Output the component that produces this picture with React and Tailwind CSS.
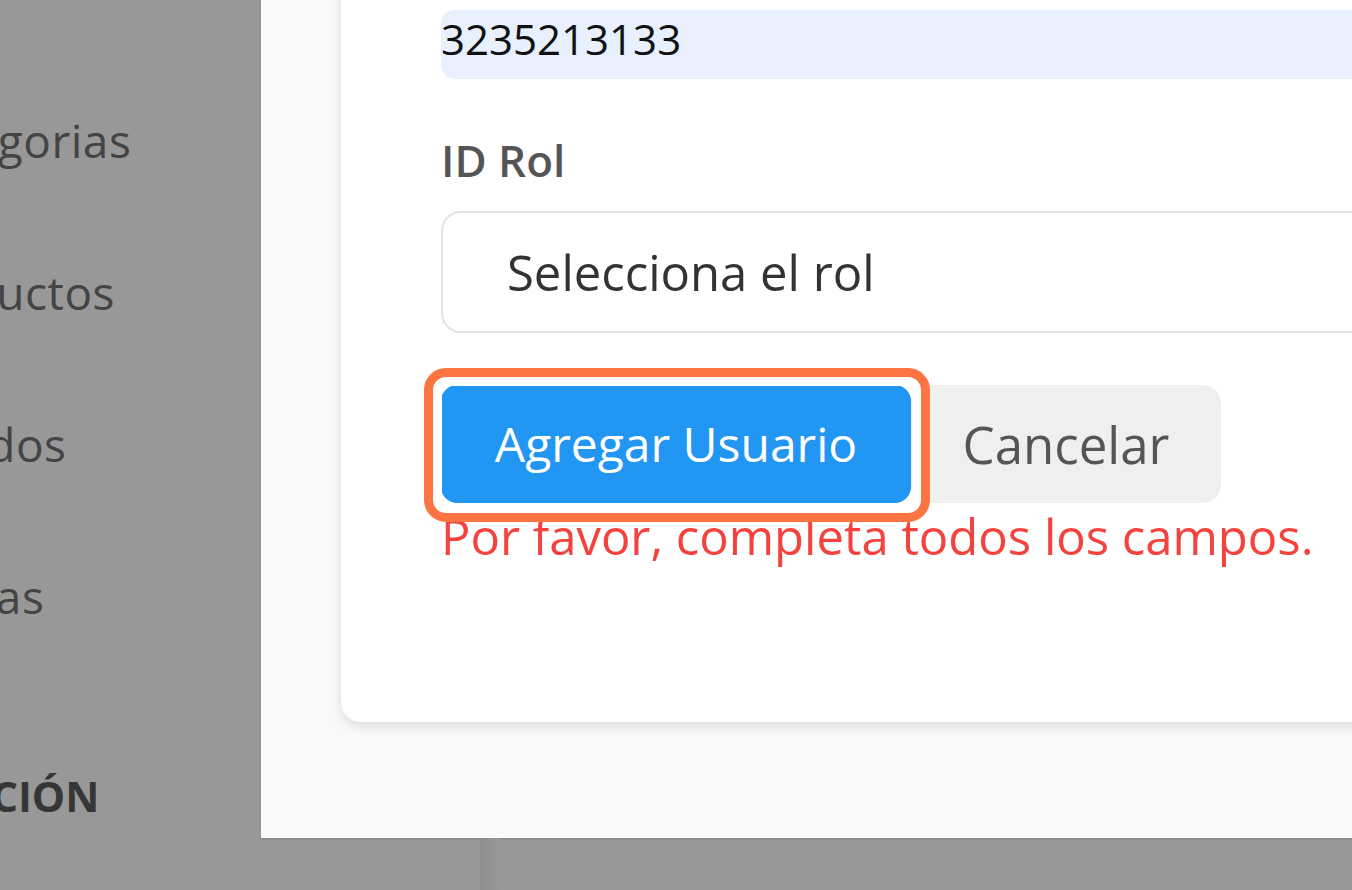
import React from "react";

const navItems = [
  { label: "Categorias", offset: "-ml-[101px]" },
  { label: "Productos", offset: "-ml-[108px]" },
  { label: "Pedidos", offset: "-ml-[108px]" },
  { label: "Ventas", offset: "-ml-[104px]" },
];

const Sidebar = () => (
  <div className="w-[261px] shrink-0 h-full overflow-hidden bg-[#989898] text-[#444]">
    <div className="pt-[64px] flex flex-col">
      {navItems.map((item) => (
        <div key={item.label} className={`h-[152px] flex items-center whitespace-nowrap ${item.offset}`}>
          <span className="text-[46px] leading-[46px] tracking-[0.5px]">{item.label}</span>
        </div>
      ))}
    </div>
    <div className="mt-[102px] h-[44px] flex items-center -ml-[259px] whitespace-nowrap">
      <span className="text-[42px] leading-[42px] font-bold text-[#363636]">CONFIGURACIÓN</span>
    </div>
  </div>
);

const UserForm = () => (
  <div className="-mt-[50px] pt-[60px] pl-[100px] pb-[156px] w-[1300px] shrink-0 bg-white rounded-[20px] shadow-[0_4px_12px_rgba(0,0,0,0.12)]">
    {/* telefono (autocompletado) */}
    <div className="h-[69px] bg-[#e8f0fe] rounded-[14px] pt-[8px]">
      <span className="text-[42px] leading-[42px] text-[#111]">3235213133</span>
    </div>

    <div className="mt-[59px] h-[44px] text-[44px] leading-[44px] font-semibold text-[#555]">ID Rol</div>

    <div className="mt-[29px] h-[122px] border-2 border-[#e2e2e2] rounded-[20px] pl-[64px] flex items-center">
      <span className="text-[49px] leading-[49px] text-[#333]">Selecciona el rol</span>
    </div>

    <div className="mt-[52px] flex">
      <div className="relative">
        <button className="w-[470px] h-[118px] bg-[#2196f3] rounded-[16px] text-white text-[48px] leading-[48px] flex items-center justify-center">
          Agregar Usuario
        </button>
        {/* resaltado */}
        <div className="absolute z-10 -left-[17px] -top-[17px] -right-[19px] -bottom-[19px] border-[9px] border-[#fd7443] rounded-[22px] shadow-[inset_0_0_0_9px_#ffffff]" />
      </div>
      <button className="w-[310px] h-[118px] bg-[#efefef] rounded-[18px] text-[#555] text-[51px] leading-[51px] flex items-center justify-center">
        Cancelar
      </button>
    </div>

    <div className="mt-[3px] h-[60px] text-[49px] leading-[60px] text-[#f4433f] whitespace-nowrap">
      Por favor, completa todos los campos.
    </div>
  </div>
);

export default function App() {
  return (
    <div className="w-[1352px] h-[890px] overflow-hidden flex bg-[#989898] font-['Open_Sans',sans-serif]">
      <Sidebar />
      <div className="flex-1 flex flex-col min-w-0">
        <div className="h-[838px] shrink-0 bg-[#f9f9f9] border-l border-[#fcfcfc] pl-[79px] flex items-start overflow-hidden shadow-[0_1px_2px_rgba(0,0,0,0.15)]">
          <UserForm />
        </div>
        <div className="flex-1 flex">
          <div className="w-[219px] shrink-0" />
          <div className="w-[20px] bg-gradient-to-r from-[#8d8d8d] to-[#989898]" />
        </div>
      </div>
    </div>
  );
}
